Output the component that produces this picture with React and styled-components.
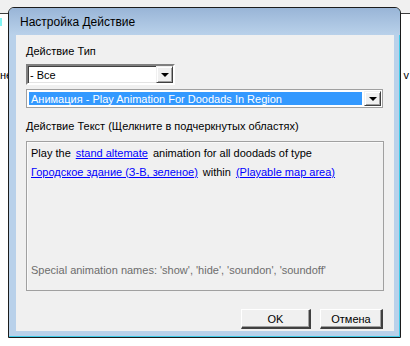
import React from 'react';
import styled, { createGlobalStyle } from 'styled-components';

const GlobalStyle = createGlobalStyle`
  html, body {
    margin: 0;
    padding: 0;
    background: #ffffff;
  }
  body {
    width: 410px;
    height: 346px;
    overflow: hidden;
    font-family: "Liberation Sans", Arial, sans-serif;
    font-size: 11px;
    color: #000;
  }
`;

const Desktop = styled.div`
  position: relative;
  width: 410px;
  height: 346px;
  background: #ffffff;
`;

const BehindBar = styled.div`
  height: 13px;
  background: #f0f0f0;
  border-bottom: 1px solid #3c3c3c;
`;

const BehindMark = styled.div`
  width: 2px;
  height: 8px;
  margin-top: 4px;
  background: #7ff3f3;
`;

const BehindText = styled.div`
  display: flex;
  justify-content: space-between;
  margin-top: 43px;
  padding-right: 1px;
  font-size: 11px;
  line-height: 13px;
`;

const Window = styled.div`
  position: absolute;
  left: 8px;
  top: 7px;
  width: 393px;
  height: 331px;
  box-sizing: border-box;
  display: flex;
  flex-direction: column;
  border: 1px solid #1c1c1c;
  border-radius: 6px 6px 0 0;
  background: #b9d1ea;
  box-shadow: inset -1px -1px 0 #3fcbe8;
`;

const TitleBar = styled.div`
  height: 27px;
  display: flex;
  align-items: center;
  padding-left: 11px;
  border-radius: 5px 5px 0 0;
  background: linear-gradient(#99b5d7, #b9d1ea);
  font-size: 12px;
  color: #000;
`;

const Client = styled.div`
  flex: 1;
  margin: 0 6px 6px 7px;
  padding: 10px 10px 0 10px;
  background: #f0f0f0;
  display: flex;
  flex-direction: column;
`;

const Label = styled.div`
  height: 13px;
  line-height: 13px;
  margin-bottom: ${(p) => p.$gap || 0}px;
`;

const Combo = styled.div`
  position: relative;
  box-sizing: border-box;
  width: ${(p) => p.$width};
  height: ${(p) => p.$height}px;
  display: flex;
  align-items: stretch;
  background: #ffffff;
  border: ${(p) => (p.$sunken ? '2px solid' : '1px solid')};
  border-color: ${(p) =>
    p.$sunken ? '#808080 #ffffff #ffffff #808080' : '#a0a0a0'};
  box-shadow: ${(p) =>
    p.$sunken ? 'inset 1px 1px 0 #404040, inset -1px -1px 0 #e3e3e3' : 'none'};
  margin-bottom: ${(p) => p.$gap || 0}px;
`;

const ComboValue = styled.div`
  flex: 1;
  display: flex;
  align-items: center;
  padding-left: 2px;
  margin: ${(p) => (p.$selected ? '2px 1px 2px 2px' : '0')};
  background: ${(p) => (p.$selected ? '#3399ff' : 'transparent')};
  color: ${(p) => (p.$selected ? '#ffffff' : '#000000')};
  font-size: 11px;
  white-space: nowrap;
`;

const DropButton = styled.div`
  width: 17px;
  margin: ${(p) => (p.$flat ? '1px' : '0')};
  box-sizing: border-box;
  display: flex;
  align-items: center;
  justify-content: center;
  background: #f0f0f0;
  border-top: 1px solid #f0f0f0;
  border-left: 1px solid #f0f0f0;
  border-right: 1px solid #404040;
  border-bottom: 1px solid #404040;
  box-shadow: inset 1px 1px 0 #ffffff, inset -1px -1px 0 #a0a0a0;
`;

const Arrow = styled.span`
  width: 0;
  height: 0;
  border-left: 4px solid transparent;
  border-right: 4px solid transparent;
  border-top: 4px solid #000;
  margin-top: 1px;
`;

const TextPanel = styled.div`
  height: 150px;
  box-sizing: border-box;
  margin-top: 8px;
  padding: 2px 5px 13px 4px;
  border: 1px solid #a0a0a0;
  box-shadow: inset 1px 1px 0 #fafafa;
  display: flex;
  flex-direction: column;
  justify-content: space-between;
  font-size: 11px;
`;

const Sentence = styled.div`
  line-height: 19px;
`;

const Link = styled.span`
  color: #0000ff;
  text-decoration: underline;
  margin: 0 ${(p) => p.$right ?? 5}px 0 ${(p) => p.$left ?? 5}px;
`;

const Note = styled.div`
  color: #6d6d6d;
  font-size: 11px;
  line-height: 13px;
`;

const ButtonRow = styled.div`
  display: flex;
  justify-content: flex-end;
  gap: 9px;
  margin-top: 18px;
  padding-right: 1px;
`;

const Button = styled.button`
  width: ${(p) => p.$width}px;
  height: 20px;
  box-sizing: border-box;
  padding: 0;
  font-family: "Liberation Sans", Arial, sans-serif;
  font-size: 11px;
  color: #000;
  background: #f0f0f0;
  border-style: solid;
  border-width: 1px 2px 2px 1px;
  border-color: #ffffff #404040 #404040 #ffffff;
  box-shadow: inset -1px -1px 0 #a0a0a0;
`;

export default function App() {
  return (
    <>
      <GlobalStyle />
      <Desktop>
        <BehindBar />
        <BehindMark />
        <BehindText>
          <span>не</span>
          <span>) v</span>
        </BehindText>
        <Window>
          <TitleBar>Настройка Действие</TitleBar>
          <Client>
            <Label $gap={6}>Действие Тип</Label>
            <Combo $sunken $width="149px" $height={21} $gap={4}>
              <ComboValue>- Все</ComboValue>
              <DropButton>
                <Arrow />
              </DropButton>
            </Combo>
            <Combo $width="357px" $height={19} $gap={12}>
              <ComboValue $selected>Анимация - Play Animation For Doodads In Region</ComboValue>
              <DropButton $flat>
                <Arrow />
              </DropButton>
            </Combo>
            <Label>Действие Текст (Щелкните в подчеркнутых областях)</Label>
            <TextPanel>
              <Sentence>
                Play the<Link>stand altemate</Link>animation for all doodads of type
                <br />
                <Link $left={0}>Городское здание (З-В, зеленое)</Link>within<Link>(Playable map area)</Link>
              </Sentence>
              <Note>Special animation names: 'show', 'hide', 'soundon', 'soundoff'</Note>
            </TextPanel>
            <ButtonRow>
              <Button $width={70}>OK</Button>
              <Button $width={63}>Отмена</Button>
            </ButtonRow>
          </Client>
        </Window>
      </Desktop>
    </>
  );
}
